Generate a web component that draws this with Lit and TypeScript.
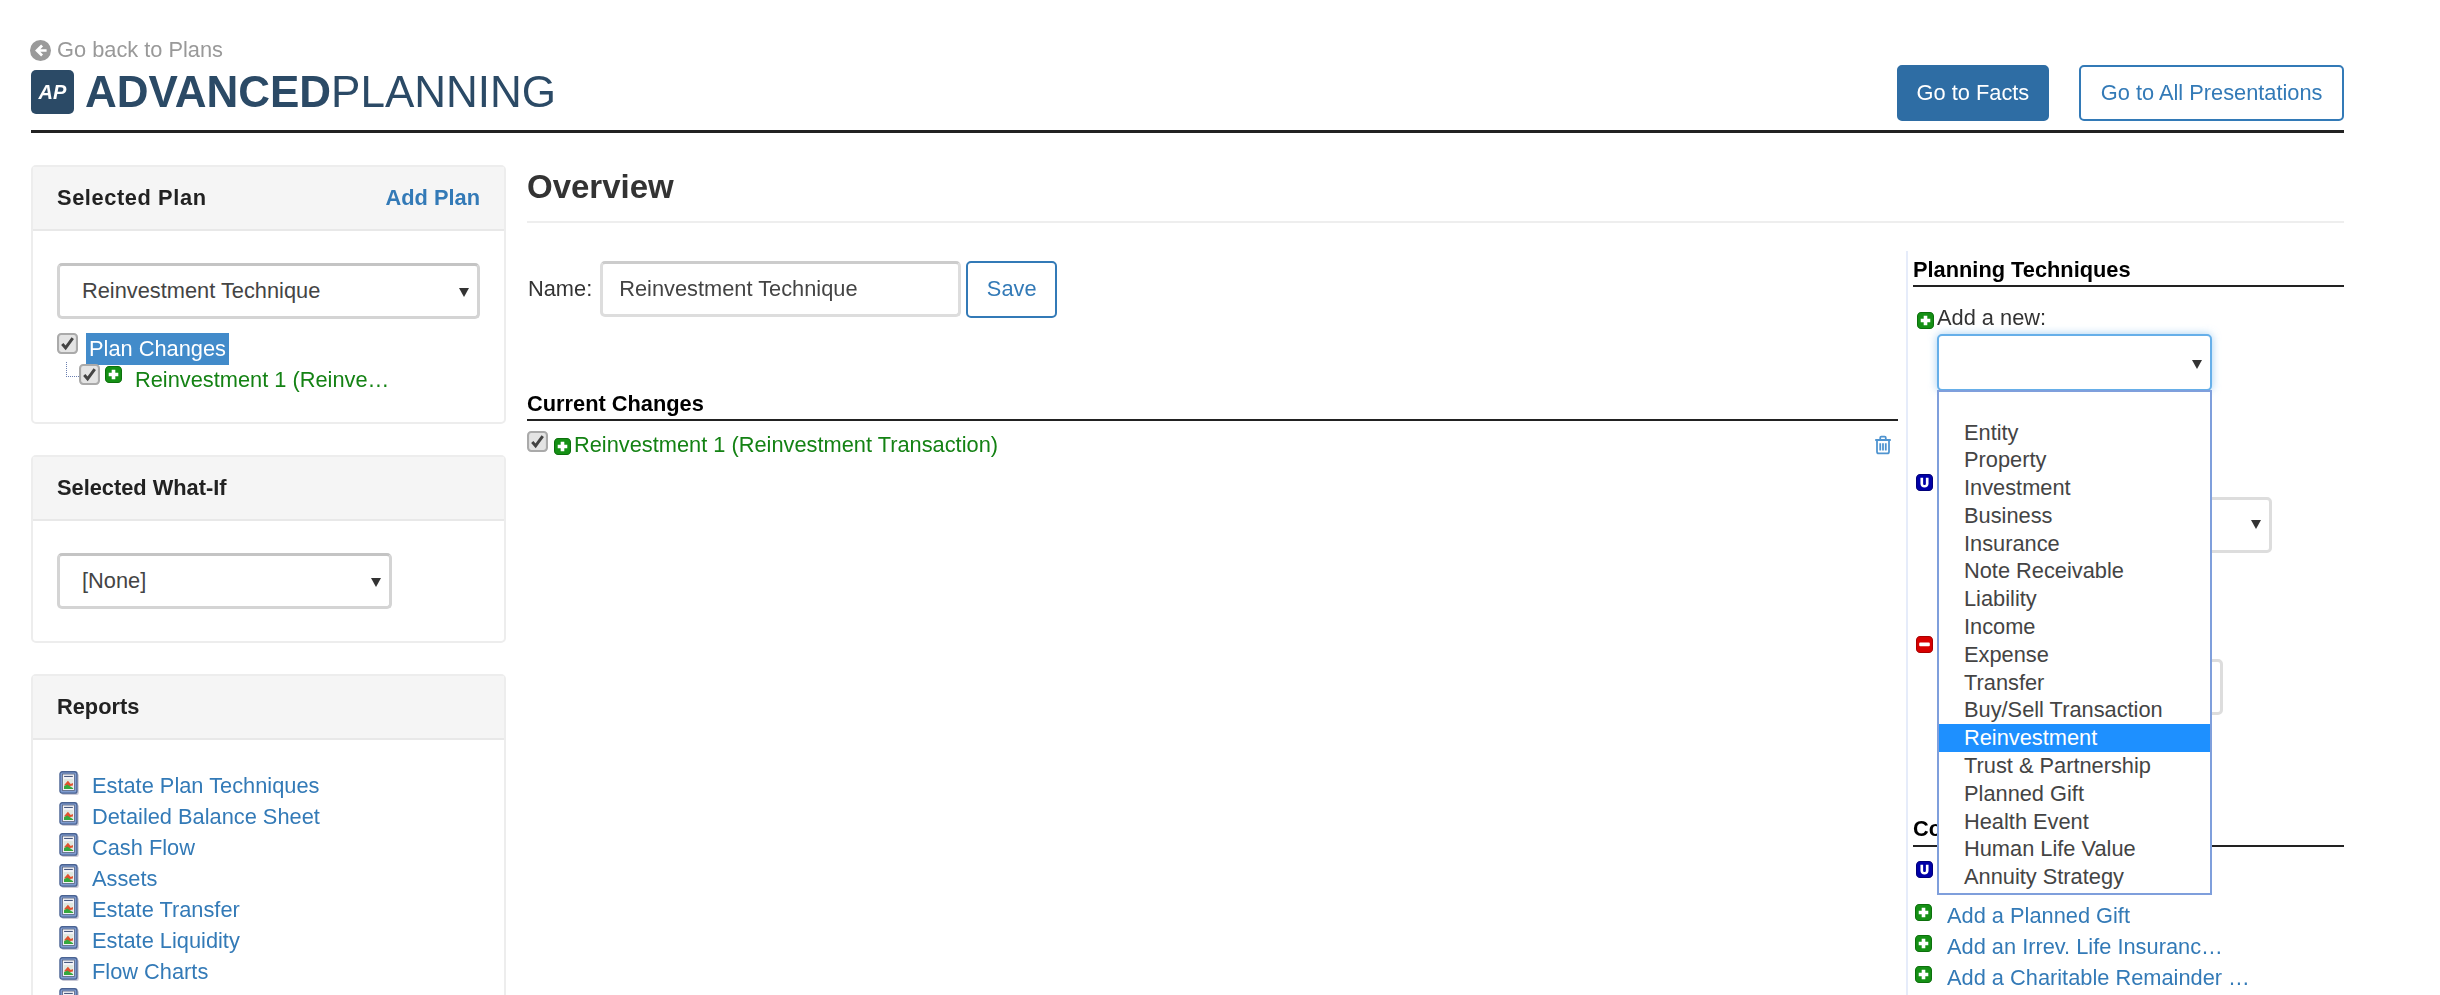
import { LitElement, html, css } from "lit";
import { customElement } from "lit/decorators.js";

const plus = html`<svg class="ico" viewBox="0 0 16 16"><rect x="0.5" y="0.5" width="15" height="15" rx="3.5" fill="#159015" stroke="#0c700c"/><path d="M6.3 3.5h3.4v2.8h2.8v3.4H9.7v2.8H6.3V9.7H3.5V6.3h2.8z" fill="#fff"/></svg>`;
const upd = html`<svg class="ico" viewBox="0 0 16 16"><rect x="0.5" y="0.5" width="15" height="15" rx="3.5" fill="#0000a8" stroke="#00007a"/><path d="M4.2 3.5h2.5v5.4c0 1 .5 1.5 1.3 1.5s1.3-.5 1.3-1.5V3.5h2.5v5.6c0 2.3-1.5 3.5-3.8 3.5s-3.8-1.2-3.8-3.5z" fill="#fff"/></svg>`;
const minus = html`<svg class="ico" viewBox="0 0 16 16"><rect x="0.5" y="0.5" width="15" height="15" rx="3.5" fill="#d80000" stroke="#a80000"/><rect x="3" y="6.2" width="10" height="3.4" rx="1" fill="#fff"/></svg>`;
const check = html`<svg class="chk" viewBox="0 0 20 20"><rect x="1" y="1" width="18" height="18" rx="3" fill="#e4e4e4" stroke="#aaaaaa" stroke-width="2"/><path d="M5 10.5l3.2 3.6L15 4.8" fill="none" stroke="#444" stroke-width="2.8"/></svg>`;
const report = html`<svg class="rep" viewBox="0 0 18 22"><rect x="2" y="2" width="16" height="20" rx="2" fill="#c9c9d6"/><rect x="0.7" y="0.7" width="15.6" height="19.6" rx="2" fill="#7f9cd0" stroke="#4a6392" stroke-width="1.2"/><rect x="3" y="2.8" width="11" height="15" fill="#f2f2f6" stroke="#56617a" stroke-width=".7"/><path d="M4.5 5h8" stroke="#4a5a80" stroke-width="1"/><rect x="4.2" y="7.4" width="8.6" height="9" fill="#dfe8df"/><path d="M4.4 13l3.6-4 2.6 3 2-1v2.4l-4 .6z" fill="#e2502e"/><path d="M4.4 14l3-1.6 5.4 3.4v.6H4.4z" fill="#35a83c"/></svg>`;
const trash = html`<svg class="trash" viewBox="0 0 16 18"><path d="M1 4.5h14M5.5 4V2.4c0-.6.4-1 1-1h3c.6 0 1 .4 1 1V4M2.6 4.5v10.6c0 .9.6 1.5 1.5 1.5h7.8c.9 0 1.5-.6 1.5-1.5V4.5M5.5 7.5v6.5M8 7.5v6.5M10.5 7.5v6.5" fill="none" stroke="#4f94d0" stroke-width="1.6"/></svg>`;
const back = html`<svg class="back" viewBox="0 0 20 20"><circle cx="10" cy="10" r="10" fill="#9a9a9a"/><path d="M10.6 4.4l1.8 1.8-2.6 2.5h6v2.6h-6l2.6 2.5-1.8 1.8L4.8 10z" fill="#fff"/></svg>`;

const options = ["Entity","Property","Investment","Business","Insurance","Note Receivable","Liability","Income","Expense","Transfer","Buy/Sell Transaction","Reinvestment","Trust & Partnership","Planned Gift","Health Event","Human Life Value","Annuity Strategy"];
const reports = ["Estate Plan Techniques","Detailed Balance Sheet","Cash Flow","Assets","Estate Transfer","Estate Liquidity","Flow Charts",""];

@customElement("app-root")
export class AppRoot extends LitElement {
  static styles = css`
    :host { display: block; height: 995px; overflow: hidden; background: #fff; color: #333; font: 21.8px/28px "Liberation Sans", Arial, sans-serif; }
    * { box-sizing: border-box; }
    .page { width: 2313px; margin-left: 31px; padding-top: 36px; filter: blur(0.4px); }
    .back-link { display: flex; align-items: center; gap: 6px; height: 28px; color: #999; }
    .back { width: 21px; height: 21px; margin-left: -1px; }
    .head { display: flex; justify-content: space-between; align-items: flex-start; height: 67px; }
    .brand { display: flex; align-items: center; gap: 11px; margin-top: 6px; height: 44px; }
    .logo { width: 43px; height: 44px; border-radius: 5px; background: #2b4a66; color: #fff; font: italic bold 20px/44px "Liberation Sans", sans-serif; text-align: center; }
    .title { font-size: 44px; line-height: 44px; color: #2b4a66; }
    .title b { font-weight: 700; }
    .btns { display: flex; gap: 30px; margin-top: 1px; }
    .btn { height: 56px; border: 2px solid #337ab7; border-radius: 5px; padding: 0 19.5px; display: flex; align-items: center; color: #337ab7; background: #fff; }
    .btn.primary { background: #2e6da4; border-color: #2e6da4; color: #fff; padding: 0 18px; }
    .rule { height: 3px; background: #222; margin-top: -1px; }
    .body { display: grid; grid-template-columns: 475px 1fr; gap: 21px; margin-top: 32px; }
    .panel { border: 2px solid #ededed; border-radius: 5px; margin-bottom: 31px; }
    .panel-h { height: 64px; background: #f5f5f5; border-bottom: 2px solid #e8e8e8; display: flex; justify-content: space-between; align-items: center; padding: 0 24px; font-weight: 700; color: #222; }
    .panel-h a { color: #337ab7; }
    .panel-h .wide { letter-spacing: .6px; }
    .panel-b { padding: 32px 24px 0; }
    .sel { position: relative; height: 56px; border: 3px solid #d4d4d4; border-top-color: #c4c4c4; border-radius: 5px; padding-left: 22px; display: flex; align-items: center; background: #fff; color: #444; }
    .sel::after { content: ""; position: absolute; right: 8px; top: 22px; border: 5.5px solid transparent; border-top: 9px solid #333; border-bottom: 0; }
    .tree { height: 103px; padding-top: 14px; }
    .node { display: flex; align-items: center; height: 31px; }
    .chk { width: 21px; height: 21px; flex: none; margin-top: -10px; }
    .sel-txt { background: #428bca; color: #fff; padding: 0 3px; margin-left: 8px; height: 32px; line-height: 32px; }
    .sub { padding-left: 22px; position: relative; }
    .sub::before { content: ""; position: absolute; left: 9px; top: -2px; width: 12px; height: 14px; border-left: 1px dotted #6a7fb0; border-bottom: 1px dotted #6a7fb0; }
    .ico { width: 17px; height: 17px; flex: none; }
    .sub .ico { margin: -10px 0 0 5px; }
    .green { color: #148214; }
    .sub .green { margin-left: 13px; }
    .what { width: 335px; }
    .rows { padding-top: 30px; }
    .rrow { display: flex; height: 31px; align-items: center; color: #337ab7; }
    .rep { width: 20px; height: 24px; flex: none; margin: -6px 13px 0 2px; }
    .main-t { font-size: 33px; line-height: 34px; font-weight: 700; color: #333; padding-top: 5px; height: 58px; border-bottom: 2px solid #eee; }
    .cols { display: grid; grid-template-columns: 1371px 1fr; gap: 8px; }
    .namerow { display: flex; align-items: center; margin-top: 38px; height: 56px; padding-left: 1px; }
    .input { width: 361px; height: 56px; border: 3px solid #ddd; border-top-color: #ccc; border-radius: 5px; margin-left: 8px; padding: 0 16px; font: inherit; color: #444; outline: 0; }
    .save { width: 91px; height: 57px; margin-left: 5px; border: 2px solid #337ab7; border-radius: 5px; color: #337ab7; display: flex; align-items: center; justify-content: center; }
    .sect { font-weight: 700; color: #000; border-bottom: 2px solid #222; height: 31px; line-height: 28px; }
    .cur { margin-top: 73px; }
    .change { display: flex; align-items: center; height: 32px; margin-top: 8px; position: relative; }
    .change .chk { margin-top: -8px; }
    .change .ico { margin: 2px 3px 0 6px; }
    .change .trash { margin-left: auto; margin-right: 6px; }
    .trash { width: 18px; height: 20px; }
    .right { position: relative; border-left: 2px solid #e6ecfa; margin-top: 28px; padding-left: 5px; height: 760px; }
    .right .sect { margin-top: 0; height: 36px; line-height: 38px; }
    .add { display: flex; align-items: center; height: 28px; margin-top: 17px; padding-left: 4px; }
    .add .ico { margin-right: 3px; margin-top: 4px; }
    .focus { position: absolute; left: 29px; top: 83px; width: 275px; height: 57px; border: 2px solid #66afe9; border-radius: 5px; box-shadow: 0 0 8px rgba(102,175,233,.6); background: #fff; }
    .focus::after { content: ""; position: absolute; right: 8px; top: 24px; border: 5.5px solid transparent; border-top: 9px solid #333; border-bottom: 0; }
    .menu { position: absolute; left: 29px; top: 139px; width: 275px; height: 505px; border: 2px solid #7f9fdc; background: #fff; padding-top: 26.5px; color: #444; z-index: 2; }
    .opt { height: 27.8px; line-height: 27.8px; padding-left: 25px; }
    .opt.on { background: #1e90ff; color: #fff; }
    .ghost { position: absolute; height: 56px; border: 3px solid #ddd; border-radius: 5px; background: #fff; }
    .ghost.a { left: 200px; top: 246px; width: 164px; }
    .ghost.a::after { content: ""; position: absolute; right: 8px; top: 20px; border: 5.5px solid transparent; border-top: 9px solid #333; border-bottom: 0; }
    .ghost.b { left: 200px; top: 408px; width: 115px; }
    .sicon { position: absolute; left: 8px; display: flex; }
    .con { position: absolute; left: 5px; right: 0; top: 565px; }
    .con .sect { height: 31px; line-height: 26px; }
    .link { display: flex; align-items: center; height: 31px; color: #337ab7; padding-left: 2px; }
    .link .ico { margin: -6px 15px 0 0; }
    .links { padding-top: 53px; }
  `;

  render() {
    return html`<div class="page">
      <div class="back-link">${back}<span>Go back to Plans</span></div>
      <div class="head">
        <div class="brand"><div class="logo">AP</div><div class="title"><b>ADVANCED</b>PLANNING</div></div>
        <div class="btns"><div class="btn primary">Go to Facts</div><div class="btn">Go to All Presentations</div></div>
      </div>
      <div class="rule"></div>
      <div class="body">
        <div>
          <div class="panel">
            <div class="panel-h"><span class="wide">Selected Plan</span><a>Add Plan</a></div>
            <div class="panel-b">
              <div class="sel">Reinvestment Technique</div>
              <div class="tree">
                <div class="node">${check}<span class="sel-txt">Plan Changes</span></div>
                <div class="node sub">${check}${plus}<span class="green">Reinvestment 1 (Reinve…</span></div>
              </div>
            </div>
          </div>
          <div class="panel">
            <div class="panel-h"><span>Selected What-If</span></div>
            <div class="panel-b" style="height:120px"><div class="sel what">[None]</div></div>
          </div>
          <div class="panel">
            <div class="panel-h"><span>Reports</span></div>
            <div class="panel-b rows">${reports.map((r) => html`<div class="rrow">${report}<span>${r}</span></div>`)}</div>
          </div>
        </div>
        <div>
          <div class="main-t">Overview</div>
          <div class="cols">
            <div>
              <div class="namerow">Name:<input class="input" .value=${"Reinvestment Technique"} /><div class="save">Save</div></div>
              <div class="sect cur">Current Changes</div>
              <div class="change">${check}${plus}<span class="green">Reinvestment 1 (Reinvestment Transaction)</span>${trash}</div>
            </div>
            <div class="right">
              <div class="sect">Planning Techniques</div>
              <div class="add">${plus}Add a new:</div>
              <div class="focus"></div>
              <div class="menu">${options.map((o) => html`<div class="opt ${o === "Reinvestment" ? "on" : ""}">${o}</div>`)}</div>
              <div class="ghost a"></div>
              <div class="ghost b"></div>
              <div class="sicon" style="top:223px">${upd}</div>
              <div class="sicon" style="top:385px">${minus}</div>
              <div class="con">
                <div class="sect">Co</div>
                <div class="sicon" style="top:45px;left:3px">${upd}</div>
                <div class="links">
                  <div class="link">${plus}Add a Planned Gift</div>
                  <div class="link">${plus}Add an Irrev. Life Insuranc…</div>
                  <div class="link">${plus}Add a Charitable Remainder …</div>
                </div>
              </div>
            </div>
          </div>
        </div>
      </div>
    </div>`;
  }
}
